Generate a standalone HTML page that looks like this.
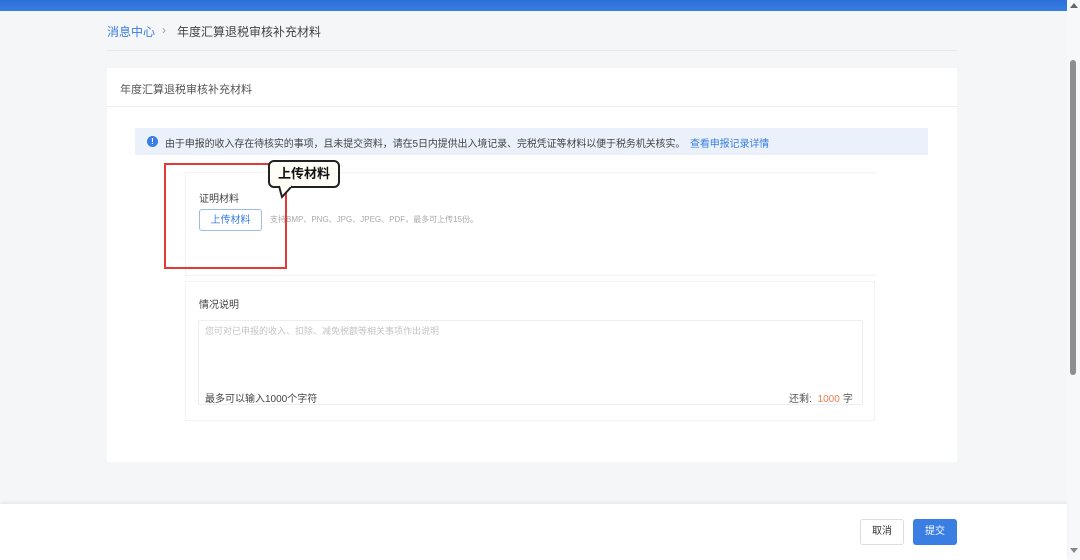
<!DOCTYPE html>
<html><head><meta charset="utf-8"><style>
*{margin:0;padding:0;box-sizing:border-box}
body{width:1080px;height:560px;overflow:hidden;background:#f5f6f8;font-family:"Liberation Sans","Noto Sans CJK SC",sans-serif;position:relative;color:#333}
.a{position:absolute}
</style></head><body>
<div class="a" style="left:0;top:0;width:1067px;height:11px;background:linear-gradient(#2c6fd8,#3a7de3)"></div>
<div class="a" style="left:1067px;top:0;width:13px;height:560px;background:#f7f8fa"></div>
<div class="a" style="left:1070px;top:3px;width:0;height:0;border-left:4px solid transparent;border-right:4px solid transparent;border-bottom:5px solid #666"></div>
<div class="a" style="left:1070px;top:60px;width:6px;height:315px;background:#8e8e8e;border-radius:3px"></div>
<div class="a" style="left:1070px;top:548px;width:0;height:0;border-left:4px solid transparent;border-right:4px solid transparent;border-top:5px solid #888"></div>

<div class="a" style="left:107px;top:23px;font-size:12px;color:#3a7de3">消息中心</div>
<div class="a" style="left:162px;top:23px;font-size:12px;color:#999">›</div>
<div class="a" style="left:177px;top:23px;font-size:12px;color:#444">年度汇算退税审核补充材料</div>
<div class="a" style="left:107px;top:50px;width:850px;height:1px;background:#e6e8eb"></div>

<div class="a" style="left:107px;top:68px;width:850px;height:394px;background:#fff"></div>
<div class="a" style="left:120px;top:81px;font-size:11px;color:#555">年度汇算退税审核补充材料</div>
<div class="a" style="left:107px;top:106px;width:850px;height:1px;background:#eceef1"></div>

<div class="a" style="left:135px;top:128px;width:793px;height:27px;background:#eaf1fb"></div>
<div class="a" style="left:147px;top:136px;width:11px;height:11px;border-radius:50%;background:#3a7de3;color:#fff;font-size:8px;line-height:11px;text-align:center;font-weight:bold">!</div>
<div class="a" style="left:165px;top:135px;font-size:10px;color:#444;white-space:nowrap;letter-spacing:-0.1px">由于申报的收入存在待核实的事项，且未提交资料，请在5日内提供出入境记录、完税凭证等材料以便于税务机关核实。 <span style="color:#3a7de3;margin-left:2px">查看申报记录详情</span></div>

<div class="a" style="left:185px;top:172px;width:692px;height:104px;border:1px solid #f1f2f4;border-right:none"></div>
<div class="a" style="left:199px;top:190px;font-size:10px;color:#444">证明材料</div>
<div class="a" style="left:199px;top:209px;width:63px;height:22px;border:1px solid #9dbbe8;border-radius:3px;font-size:10px;color:#3a7de3;text-align:center;line-height:22px">上传材料</div>
<div class="a" style="left:270px;top:214px;font-size:8px;color:#aaa;white-space:nowrap">支持BMP、PNG、JPG、JPEG、PDF，最多可上传15份。</div>

<div class="a" style="left:164px;top:163px;width:123px;height:106px;border:2px solid #e23a34"></div>
<div class="a" style="left:268px;top:160px;width:72px;height:28px;background:#fffdf6;border:2px solid #222;border-radius:6px;font-size:13px;font-weight:bold;text-align:center;line-height:24px;color:#111">上传材料</div>
<svg class="a" style="left:278px;top:185px" width="18" height="14"><path d="M1 1 L4 12 L14 1" fill="#fffdf6" stroke="#222" stroke-width="2"/><rect x="3" y="0" width="10" height="2" fill="#fffdf6"/></svg>

<div class="a" style="left:185px;top:281px;width:690px;height:140px;border:1px solid #f1f2f4"></div>
<div class="a" style="left:199px;top:296px;font-size:10px;color:#444">情况说明</div>
<div class="a" style="left:198px;top:320px;width:665px;height:85px;border:1px solid #eceef1;border-radius:2px"></div>
<div class="a" style="left:205px;top:324px;font-size:9px;color:#c4c4c4">您可对已申报的收入、扣除、减免税额等相关事项作出说明</div>
<div class="a" style="left:205px;top:390px;font-size:10px;color:#444">最多可以输入1000个字符</div>
<div class="a" style="left:789px;top:390px;font-size:10px;color:#555">还剩: <span style="color:#f08050;margin:0 3px">1000</span>字</div>

<div class="a" style="left:0;top:504px;width:1067px;height:56px;background:#fff;box-shadow:0 -2px 3px rgba(0,0,0,.06)"></div>
<div class="a" style="left:860px;top:519px;width:44px;height:26px;border:1px solid #ddd;border-radius:3px;background:#fff;font-size:10px;text-align:center;line-height:24px;color:#333">取消</div>
<div class="a" style="left:913px;top:519px;width:44px;height:26px;border-radius:3px;background:#3a7de3;font-size:10px;text-align:center;line-height:26px;color:#fff">提交</div>
</body></html>
